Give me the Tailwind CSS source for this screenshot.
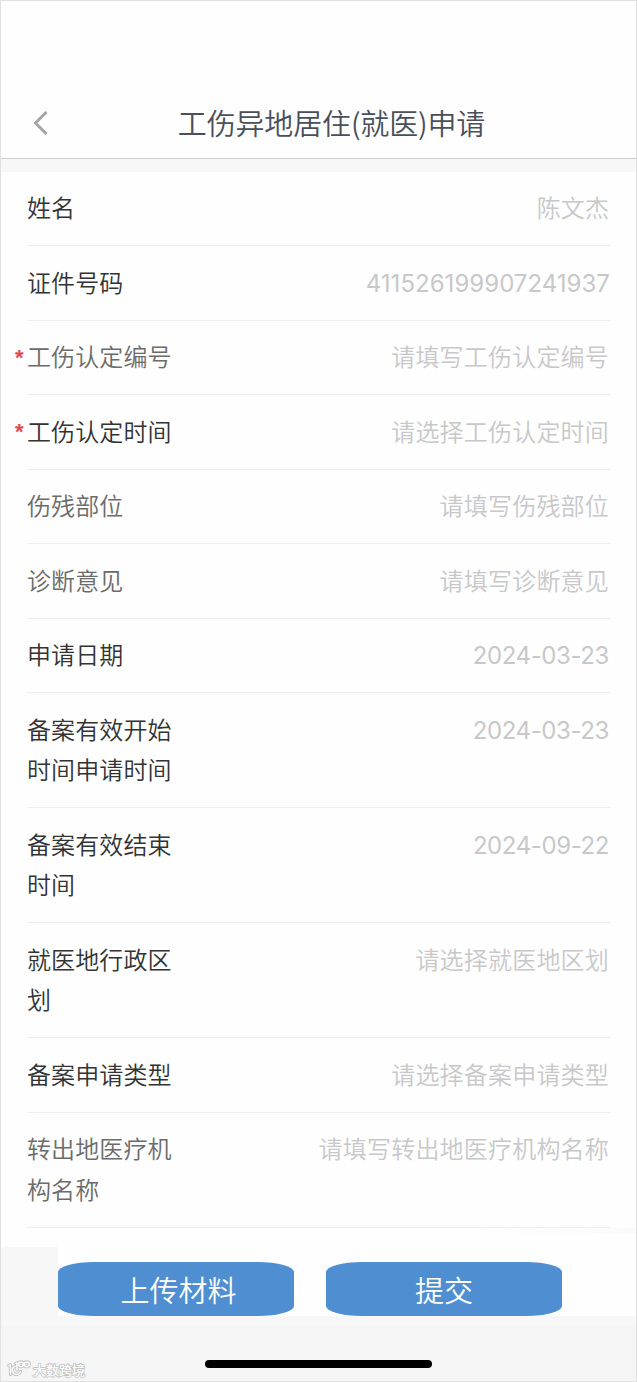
<!DOCTYPE html>
<html lang="zh-CN">
<head>
<meta charset="utf-8">
<title>工伤异地居住(就医)申请</title>
<script src="https://cdn.jsdelivr.net/npm/@tailwindcss/browser@4"></script>
</head>
<body class="bg-white">
<div class="relative flex h-[1382px] w-[637px] flex-col overflow-hidden border border-[#e0e0e0] bg-[#fefefe] font-['Inter','Noto_Sans_CJK_SC',sans-serif]">
  <header class="flex h-[158px] shrink-0 items-end border-b border-[#cdcdcd]">
    <div class="grid h-[70px] w-full grid-cols-[80px_1fr_66px] items-center">
      <svg class="ml-[31px] h-6 w-4" viewBox="0 0 16 24" fill="none" stroke="#a6a6a6" stroke-width="3"><path d="M14.5 1 3.5 12l11 11"/></svg>
      <h1 class="-mt-[2px] pl-[12px] text-center font-['Noto_Sans_CJK_SC',sans-serif] text-[29px] leading-[40px] font-[350] tracking-[-0.15px] whitespace-nowrap text-[#4a4f5a]">工伤异地居住(就医)申请</h1>
    </div>
  </header>
  <div class="h-[12.5px] shrink-0 bg-[#f7f7f7]"></div>
  <main class="flex h-[1075.5px] shrink-0 flex-col px-[26px] text-[24px] leading-[40.5px] font-[350] tracking-[0.1px] text-[#333]">
    <div class="flex h-[74.5px] shrink-0 justify-between border-b border-[#efeff2] pt-[17.5px]"><div class="w-[150px]">姓名</div><div class="pr-px text-[#c8c8ca]">陈文杰</div></div>
    <div class="flex h-[74.5px] shrink-0 justify-between border-b border-[#efeff2] pt-[17.5px]"><div class="w-[150px]">证件号码</div><div class="font-normal tracking-[0.03px] text-[#c8c8ca]">411526199907241937</div></div>
    <div class="relative flex h-[74.5px] shrink-0 justify-between border-b border-[#efeff2] pt-[17.5px]"><span class="absolute top-[17px] -left-[12px] font-['Liberation_Sans',sans-serif] text-[22px] font-bold text-[#dc4a4c]">*</span><div class="w-[150px] text-[#6b6b6b]">工伤认定编号</div><div class="pr-px tracking-[0.2px] text-[#c8c8ca]">请填写工伤认定编号</div></div>
    <div class="relative flex h-[74.5px] shrink-0 justify-between border-b border-[#efeff2] pt-[17.5px]"><span class="absolute top-[17px] -left-[12px] font-['Liberation_Sans',sans-serif] text-[22px] font-bold text-[#dc4a4c]">*</span><div class="w-[150px]">工伤认定时间</div><div class="pr-px tracking-[0.2px] text-[#c8c8ca]">请选择工伤认定时间</div></div>
    <div class="flex h-[74.5px] shrink-0 justify-between border-b border-[#efeff2] pt-[17.5px]"><div class="w-[150px] text-[#6b6b6b]">伤残部位</div><div class="pr-px tracking-[0.2px] text-[#c8c8ca]">请填写伤残部位</div></div>
    <div class="flex h-[74.5px] shrink-0 justify-between border-b border-[#efeff2] pt-[17.5px]"><div class="w-[150px] text-[#6b6b6b]">诊断意见</div><div class="pr-px tracking-[0.2px] text-[#c8c8ca]">请填写诊断意见</div></div>
    <div class="flex h-[74.5px] shrink-0 justify-between border-b border-[#efeff2] pt-[17.5px]"><div class="w-[150px]">申请日期</div><div class="pr-px font-normal tracking-[-0.4px] text-[#c8c8ca]">2024-03-23</div></div>
    <div class="flex h-[115px] shrink-0 justify-between border-b border-[#efeff2] pt-[17.5px]"><div class="w-[150px]">备案有效开始时间申请时间</div><div class="pr-px font-normal tracking-[-0.4px] text-[#c8c8ca]">2024-03-23</div></div>
    <div class="flex h-[115px] shrink-0 justify-between border-b border-[#efeff2] pt-[17.5px]"><div class="w-[150px]">备案有效结束时间</div><div class="pr-px font-normal tracking-[-0.4px] text-[#c8c8ca]">2024-09-22</div></div>
    <div class="flex h-[115px] shrink-0 justify-between border-b border-[#efeff2] pt-[17.5px]"><div class="w-[150px]">就医地行政区划</div><div class="pr-px tracking-[0.2px] text-[#c8c8ca]">请选择就医地区划</div></div>
    <div class="flex h-[74.5px] shrink-0 justify-between border-b border-[#efeff2] pt-[17.5px]"><div class="w-[150px]">备案申请类型</div><div class="pr-px tracking-[0.2px] text-[#c8c8ca]">请选择备案申请类型</div></div>
    <div class="flex h-[115px] shrink-0 justify-between border-b border-[#efeff2] pt-[17.5px]"><div class="w-[150px] text-[#6b6b6b]">转出地医疗机构名称</div><div class="pr-px tracking-[0.2px] text-[#c8c8ca]">请填写转出地医疗机构名称</div></div>
  </main>
  <div class="absolute top-[1227px] right-0 h-[5px] w-[157px] bg-linear-to-r from-[#fefefe] to-[#fafafa]"></div>
  <footer class="flex flex-1 flex-col bg-[#f7f7f7] font-['Noto_Sans_CJK_SC',sans-serif]">
    <div class="flex h-[68.5px] shrink-0">
      <div class="w-[57px]"></div>
      <div class="flex flex-1 gap-[32px] bg-[#fefefe] pt-[14.5px] text-[29px] font-[350] text-white">
        <button class="h-[54px] w-[236px] rounded-[36px/10px] bg-[#508ed2] pl-[5px] leading-[54px]">上传材料</button>
        <button class="h-[54px] w-[236px] rounded-[36px/10px] bg-[#508ed2] leading-[54px]">提交</button>
      </div>
    </div>
    <div class="mt-[10.5px] flex flex-1 items-start bg-[#f5f5f5]">
      <div class="mt-[32px] ml-[6px] flex w-[198px] items-center gap-[2px]">
        <svg class="h-[18px] w-[24px]" viewBox="0 0 24 18" fill="none" stroke-linecap="round" stroke-linejoin="round"><g stroke="#bdbdbd" stroke-width="3.2"><path d="M1.8 5.5 3.5 5v9.5M13.5 11.5a4.2 4.2 0 1 1-5.5-5.2M8.5 3.5 10 3v7"/><circle cx="14" cy="4.3" r="2.4"/><circle cx="19.8" cy="4.3" r="2.4"/></g><g stroke="#fff" stroke-width="1.5"><path d="M1.8 5.5 3.5 5v9.5M13.5 11.5a4.2 4.2 0 1 1-5.5-5.2M8.5 3.5 10 3v7"/><circle cx="14" cy="4.3" r="2.4"/><circle cx="19.8" cy="4.3" r="2.4"/></g></svg>
        <span class="mt-[3px] text-[13px] leading-[18px] font-medium text-white [-webkit-text-stroke:1.6px_#c2c2c2] [paint-order:stroke_fill]">大数跨境</span>
      </div>
      <div class="mt-[34px] h-[8px] w-[227px] rounded-full bg-black"></div>
    </div>
  </footer>
</div>
</body>
</html>
